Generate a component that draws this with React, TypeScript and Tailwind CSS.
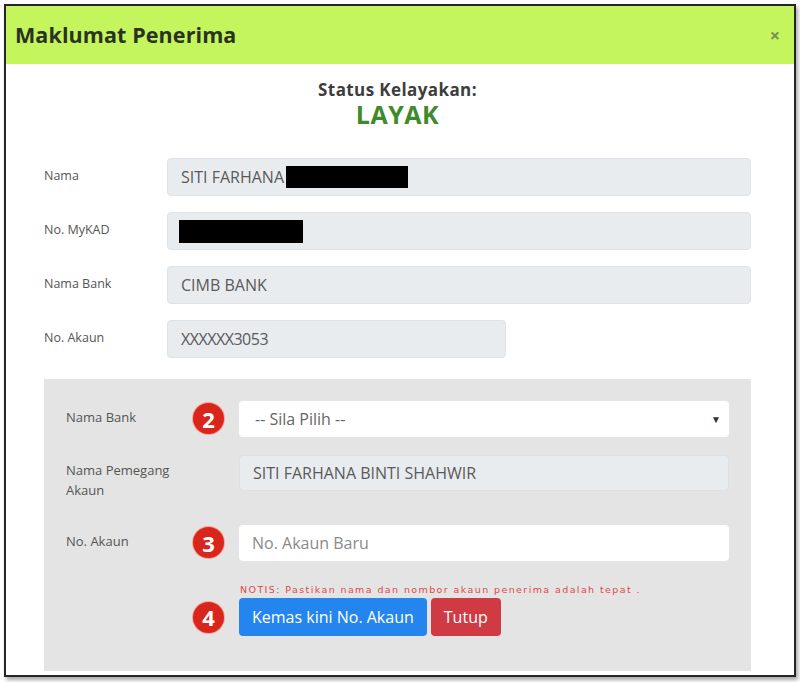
import React from "react";

const font = { fontFamily: '"Open Sans", "Noto Sans", sans-serif' };

function Step({ n }: { n: number }) {
  return (
    <div className="w-[31px] h-[31px] rounded-full bg-[#d9261c] ring-1 ring-[#f3a59c] flex items-center justify-center text-white font-bold text-[22px] leading-none">
      {n}
    </div>
  );
}

function ReadRow({ label, children, wide = true }: { label: string; children: React.ReactNode; wide?: boolean }) {
  return (
    <div className="flex">
      <div className="w-[123px] pt-[9px] text-[12.5px] text-[#555] leading-[18px]">{label}</div>
      <div
        className={`${wide ? "w-[584px]" : "w-[339px]"} h-[38px] rounded-[4px] bg-[#e9ecef] border border-[#dfe2e6] flex items-center px-[13px] text-[16px] text-[#5a5a5a]`}
      >
        {children}
      </div>
    </div>
  );
}

export default function App() {
  return (
    <div className="w-[800px] h-[682px] bg-white pt-[4px] pl-[4px]" style={font}>
      <div className="w-[792px] h-[673px] border-2 border-[#262626] shadow-[2px_3px_4px_rgba(0,0,0,0.35)] bg-white flex flex-col overflow-hidden">
        {/* header */}
        <div className="h-[58px] bg-[#c4f55c] flex items-center justify-between pl-[9px] pr-[14px] shrink-0">
          <span className="text-[21.5px] font-bold text-[#2a3222] tracking-[0.1px]">Maklumat Penerima</span>
          <span className="text-[18px] font-bold text-[#7a8f55] leading-none">×</span>
        </div>

        {/* body */}
        <div className="flex flex-col pl-[38px]">
          <div className="flex flex-col items-center pt-[15px] w-[707px]">
            <div className="text-[17px] font-bold text-[#3d3d3d] leading-[22px] tracking-[0.4px]">Status Kelayakan:</div>
            <div className="text-[25px] font-bold text-[#3f8a2c] leading-[26px] tracking-[0.5px]">LAYAK</div>
          </div>

          <div className="flex flex-col gap-[16px] mt-[31px]">
            <ReadRow label="Nama">
              <span>SITI FARHANA</span>
              <span className="ml-[2px] w-[122px] h-[22px] bg-black inline-block" />
            </ReadRow>
            <ReadRow label="No. MyKAD">
              <span className="-ml-[2px] w-[124px] h-[23px] bg-black inline-block" />
            </ReadRow>
            <ReadRow label="Nama Bank">
              <span>CIMB BANK</span>
            </ReadRow>
            <ReadRow label="No. Akaun" wide={false}>
              <span className="tracking-[-0.5px]">XXXXXX3053</span>
            </ReadRow>
          </div>

          {/* update panel */}
          <div className="mt-[21px] w-[707px] h-[292px] bg-[#e4e4e4] pt-[22px] pl-[22px] pr-[22px] flex flex-col">
            <div className="flex items-start">
              <div className="w-[127px] pt-[7px] text-[13px] text-[#555] leading-[18px]">Nama Bank</div>
              <div className="w-[29px] pt-[2px]"><Step n={2} /></div>
              <div className="ml-[17px] w-[490px] h-[36px] bg-white rounded-[4px] flex items-center justify-between pl-[16px] pr-[8px] text-[16px] text-[#666]">
                <span>-- Sila Pilih --</span>
                <span className="text-[10px] text-[#333]">▼</span>
              </div>
            </div>

            <div className="flex items-start mt-[18px]">
              <div className="w-[127px] pt-[5px] text-[13px] text-[#555] leading-[20px]">
                Nama Pemegang
                <br />
                Akaun
              </div>
              <div className="w-[29px]" />
              <div className="ml-[17px] w-[490px] h-[36px] bg-[#e9ecef] border border-[#dcdfe3] rounded-[4px] flex items-center px-[13px] text-[16px] text-[#5a5a5a]">
                SITI FARHANA BINTI SHAHWIR
              </div>
            </div>

            <div className="flex items-start mt-[25px]">
              <div className="w-[127px] pt-[7px] text-[13px] text-[#555] leading-[18px]">No. Akaun</div>
              <div className="w-[29px] pt-[2px]"><Step n={3} /></div>
              <div className="ml-[17px] w-[490px] h-[36px] bg-white rounded-[4px] flex items-center px-[13px] text-[16px] text-[#8a8a8a]">
                No. Akaun Baru
              </div>
            </div>

            <div className="flex">
              <div className="w-[174px] shrink-0" />
              <div
                className="mt-[23px] text-[9.5px] text-[#e2474a] tracking-[1.4px] leading-[12px]"
                style={{ fontFamily: '"DejaVu Sans", sans-serif' }}
              >
                NOTIS: Pastikan nama dan nombor akaun penerima adalah tepat .
              </div>
            </div>

            <div className="flex items-center mt-[2px]">
              <div className="w-[127px]" />
              <div className="w-[29px]"><Step n={4} /></div>
              <div className="ml-[17px] h-[38px] px-[13px] bg-[#2585ef] rounded-[4px] flex items-center text-white text-[16px]">
                Kemas kini No. Akaun
              </div>
              <div className="ml-[4px] h-[38px] px-[13px] bg-[#d03a42] rounded-[4px] flex items-center text-white text-[16px]">
                Tutup
              </div>
            </div>
          </div>
        </div>
      </div>
    </div>
  );
}
